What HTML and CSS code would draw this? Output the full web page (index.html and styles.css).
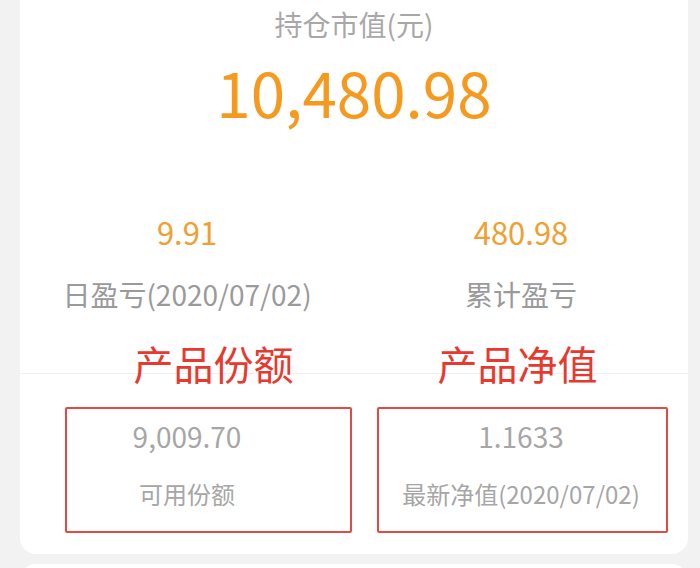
FILE: index.html
```html
<!DOCTYPE html>
<html lang="zh-CN">
<head>
  <meta charset="UTF-8" />
  <title>持仓详情</title>
  <link rel="stylesheet" href="styles.css">
</head>
<body>
  <div class="card summary">
    <div class="total-label">持仓市值(元)</div>
    <div class="total-value">10,480.98</div>

    <div class="stats">
      <div class="stat">
        <div class="stat-value">9.91</div>
        <div class="stat-label">日盈亏(2020/07/02)</div>
      </div>
      <div class="stat">
        <div class="stat-value">480.98</div>
        <div class="stat-label">累计盈亏</div>
      </div>
    </div>

    <div class="details">
      <div class="detail">
        <div class="detail-value">9,009.70</div>
        <div class="detail-label">可用份额</div>
        <div class="mark mark-left"><span class="mark-title">产品份额</span></div>
      </div>
      <div class="detail">
        <div class="detail-value">1.1633</div>
        <div class="detail-label">最新净值(2020/07/02)</div>
        <div class="mark mark-right"><span class="mark-title">产品净值</span></div>
      </div>
    </div>
  </div>

  <div class="card next"></div>
</body>
</html>
```

FILE: styles.css
```css
body {
  margin: 0;
  background-color: #f2f2f2;
  font-family: "Noto Sans CJK SC", "Noto Sans", sans-serif;
  overflow: hidden;
}

.card {
  background-color: #fff;
  border-radius: 16px;
  margin: 0 12px 0 20px;
}

.summary {
  margin-top: -20px;
  padding-top: 24px;
  text-align: center;
}

.total-label {
  font-size: 28px;
  line-height: 40px;
  color: #a8a8a8;
}

.total-value {
  margin-top: 12px;
  font-size: 62px;
  line-height: 70px;
  color: #f59a1f;
}

.stats {
  display: grid;
  grid-template-columns: 1fr 1fr;
  margin-top: 86px;
}

.stat-value {
  font-size: 31px;
  line-height: 40px;
  color: #f0a032;
}

.stat-label {
  margin-top: 22px;
  font-size: 28px;
  line-height: 40px;
  color: #9a9a9a;
}

.details {
  display: grid;
  grid-template-columns: 1fr 1fr;
  margin-top: 59px;
  border-top: 1px solid #f0f0f0;
  padding: 44px 0 42px;
}

.detail {
  position: relative;
}

.detail-value {
  font-size: 28px;
  line-height: 36px;
  color: #a6a6a6;
}

.detail-label {
  margin-top: 22px;
  font-size: 24px;
  line-height: 36px;
  color: #a6a6a6;
}

/* red annotation boxes drawn over the two cells */
.mark {
  position: absolute;
  top: -11px;
  bottom: -21px;
  border: 2px solid #e24a42;
  border-radius: 2px;
}

.mark-left {
  left: 45px;
  right: 2px;
}

.mark-right {
  left: 23px;
  right: 20px;
}

.mark-title {
  position: absolute;
  left: 0;
  right: 0;
  bottom: 100%;
  margin-bottom: 22px;
  font-size: 40px;
  line-height: 48px;
  color: #e8392f;
}

.mark-left .mark-title {
  left: 10px;
}

.mark-right .mark-title {
  right: 10px;
}

.next {
  height: 40px;
  margin-top: 10px;
}
```
